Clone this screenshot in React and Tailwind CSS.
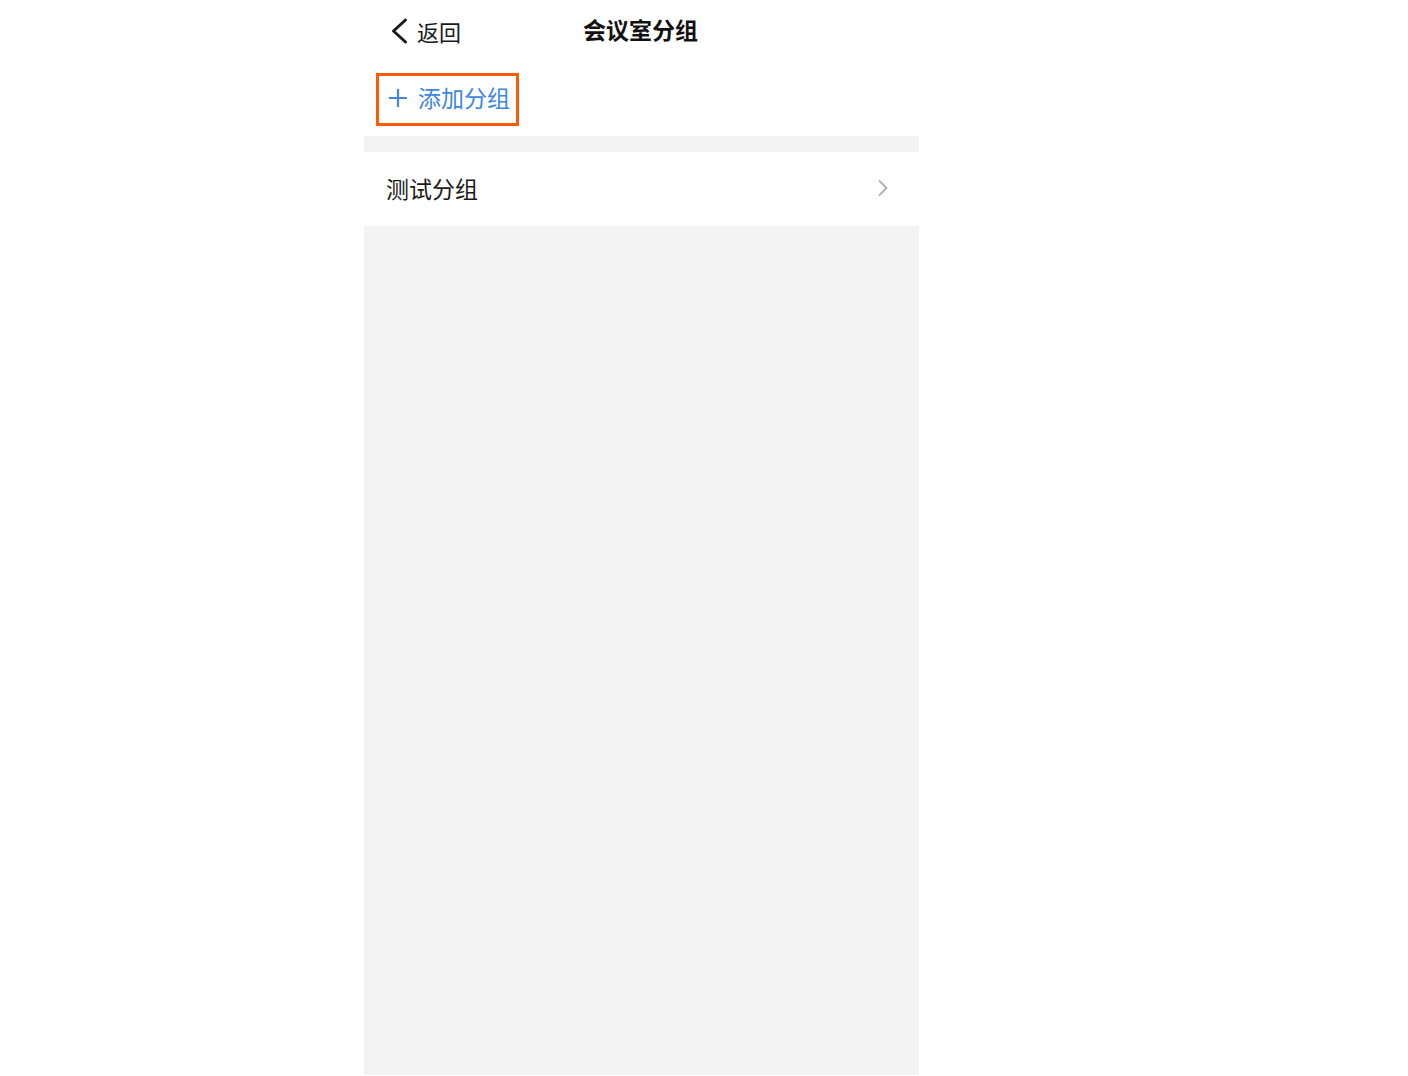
import React from "react";

export default function App() {
  const font = { fontFamily: '"PingFang SC","Noto Sans CJK SC","Noto Sans",sans-serif' };
  return (
    <div className="w-[1408px] h-[1076px] bg-white overflow-hidden" style={font}>
      <div className="ml-[364px] w-[555px] h-[1075px] flex flex-col bg-[#f3f3f3]">
        <div className="bg-white h-[136px] flex flex-col">
          <div className="relative h-[62px] flex items-center">
            <div className="flex items-center pl-[24px] pb-[1px]">
              <svg width="22" height="28" viewBox="0 0 22 28" className="mr-[6px]">
                <path d="M17.5 3 L5.5 14 L17.5 25" fill="none" stroke="#1a1a1a" strokeWidth="3" strokeLinecap="round" strokeLinejoin="round" />
              </svg>
              <span className="text-[22px] leading-none text-[#1a1a1a] ml-[1px]">返回</span>
            </div>
            <div className="absolute left-0 right-0 top-0 h-[62px] flex items-center justify-center pointer-events-none pb-[4px]">
              <span className="text-[23px] font-bold leading-none text-[#111] mr-[2px]">会议室分组</span>
            </div>
          </div>
          <div className="pl-[12px] pt-[11px]">
            <div className="w-[143px] h-[53px] border-[3px] border-[#ff5a0a] flex items-center pl-[8px] pb-[5px]">
              <svg width="22" height="22" viewBox="0 0 22 22" className="mr-[9px] mt-[2px]">
                <path d="M11 2 V20 M2 11 H20" stroke="#3d87e0" strokeWidth="2.2" />
              </svg>
              <span className="text-[23px] leading-none text-[#3d87e0]">添加分组</span>
            </div>
          </div>
        </div>
        <div className="h-[16px]" />
        <div className="bg-white h-[74px] flex items-center justify-between pl-[22px] pr-[30px]">
          <span className="text-[23px] leading-none text-[#1a1a1a] pb-[1px]">测试分组</span>
          <svg width="12" height="18" viewBox="0 0 12 18" className="mb-[3px]">
            <path d="M2.5 2 L9.5 9 L2.5 16" fill="none" stroke="#b0b0b0" strokeWidth="1.8" strokeLinecap="round" strokeLinejoin="round" />
          </svg>
        </div>
        <div className="flex-1" />
      </div>
    </div>
  );
}
